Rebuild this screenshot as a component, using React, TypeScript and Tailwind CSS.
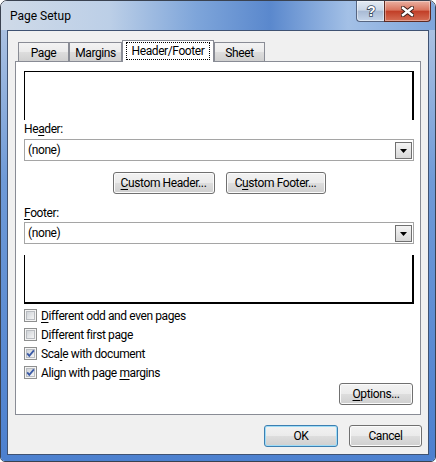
import clsx from 'clsx'
import type { ReactNode } from 'react'

const face = "font-['Roboto','Noto_Sans',sans-serif] tracking-[-0.4px]"

function Key({ children }: { children: ReactNode }) {
  return <span className="underline decoration-1 underline-offset-[2px]">{children}</span>
}

function Btn({ children, className, primary }: { children: ReactNode; className: string; primary?: boolean }) {
  return (
    <button
      type="button"
      className={clsx(
        'flex h-[22px] items-center justify-center rounded-[3px] border text-[12px] leading-4 text-black',
        'bg-[linear-gradient(#f2f2f2_0%,#ebebeb_48%,#dddddd_52%,#cfcfcf_100%)]',
        primary
          ? 'border-[#3c7fb1] shadow-[inset_0_0_0_1px_#9fdcf7]'
          : 'border-[#707070] shadow-[inset_0_0_0_1px_#fbfbfb]',
        className,
      )}
    >
      {children}
    </button>
  )
}

function Dropdown() {
  return (
    <div className="flex h-[22px] w-[390px] items-center border border-[#a5a5a5] bg-white pl-[3px] pr-[1px]">
      <span className="flex-1 text-[12px] leading-4">(none)</span>
      <div className="flex h-[17px] w-[17px] items-center justify-center border border-[#707070] bg-[linear-gradient(#f4f4f4,#d8d8d8)]">
        <svg width="7" height="4" viewBox="0 0 7 4" className="mt-[1px]">
          <path d="M0 0h7L3.5 4z" fill="#000" />
        </svg>
      </div>
    </div>
  )
}

function CheckBox({ on }: { on?: boolean }) {
  return (
    <svg width="13" height="13" viewBox="0 0 13 13" className="shrink-0">
      <defs>
        <linearGradient id="cbfill" x1="0" y1="0" x2="1" y2="1">
          <stop offset="0" stopColor="#cdd1d6" />
          <stop offset="1" stopColor="#f7f7f7" />
        </linearGradient>
      </defs>
      <rect x="0.5" y="0.5" width="12" height="12" fill="#f4f4f4" stroke="#8e8f8f" />
      <rect x="2.5" y="2.5" width="8" height="8" fill="url(#cbfill)" stroke="#b9bcc1" />
      {on && <path d="M3.2 6.3 5.3 8.8 9.9 3.3" fill="none" stroke="#3b5aa6" strokeWidth="1.8" />}
    </svg>
  )
}

const tabs = [
  { label: 'Page', width: 'w-[51px]' },
  { label: 'Margins', width: 'w-[53px]' },
  { label: 'Header/Footer', width: 'w-[92px]', active: true },
  { label: 'Sheet', width: 'w-[51px]' },
]

const options: { text: ReactNode; on?: boolean }[] = [
  { text: <><Key>D</Key>ifferent odd and even pages</> },
  { text: <>D<Key>i</Key>fferent first page</> },
  { text: <>Sca<Key>l</Key>e with document</>, on: true },
  { text: <>Align with page <Key>m</Key>argins</>, on: true },
]

export default function App() {
  return (
    <div className={clsx(face, 'flex h-[462px] w-[436px] flex-col overflow-hidden rounded-t-[7px] rounded-b-[5px] border border-[#3a4250] text-black')}>
      {/* title bar */}
      <div className="flex h-[29px] shrink-0 bg-[linear-gradient(to_right,#cfdae8_0%,#bccfe7_25%,#7ea5da_45%,#5a88cd_62%,#a3c0e6_80%,#7fa6dc_100%)]">
        <span className="mt-[7px] flex-1 pl-[9px] text-[12px] leading-4 tracking-normal">Page Setup</span>
        <div className="mr-[4px] flex h-[21px]">
          <div className="flex w-[28px] items-center justify-center rounded-bl-[4px] border border-t-0 border-r-0 border-[#566581] bg-[linear-gradient(#e4ebf4_0%,#cbd7e7_45%,#a9bbd5_52%,#c5d5ea_100%)] shadow-[inset_0_0_0_1px_rgba(255,255,255,0.45)]">
            <svg width="12" height="14" viewBox="0 0 12 14">
              <text x="6" y="12" textAnchor="middle" fontSize="14" fontWeight="bold" fontFamily="Liberation Sans, sans-serif" fill="#fff" stroke="#3b4a60" strokeWidth="1.6" paintOrder="stroke">?</text>
            </svg>
          </div>
          <div className="flex w-[47px] items-center justify-center rounded-br-[4px] border border-t-0 border-[#5e2a22] bg-[linear-gradient(#eab0a2_0%,#d9755f_45%,#c23f28_52%,#d56e55_100%)] shadow-[inset_0_0_0_1px_rgba(255,255,255,0.35)]">
            <svg width="13" height="11" viewBox="0 0 13 11">
              <path d="M2 2l9 7M11 2l-9 7" stroke="#3d1f1a" strokeWidth="4.4" strokeLinecap="square" />
              <path d="M2 2l9 7M11 2l-9 7" stroke="#fff" strokeWidth="2.4" strokeLinecap="square" />
            </svg>
          </div>
        </div>
      </div>

      {/* frame body */}
      <div className="flex flex-1 flex-col bg-[linear-gradient(#aac1e2,#6f9ad7_35%,#4c80cf)] px-[6px] pb-[6px]">
        <div className="flex flex-1 flex-col border border-[#3f5272] bg-[#f0f0f0] pt-[9px]">
          {/* tabs */}
          <div className="relative z-10 -mb-px ml-[10px] flex h-[22px] items-end text-[12px] leading-4">
            {tabs.map((t) =>
              t.active ? (
                <div key={t.label} className={clsx(t.width, 'flex h-[22px] items-start justify-center border border-b-0 border-[#898c95] bg-white pt-[1px]')}>
                  <span className="flex h-[18px] items-center border border-dotted border-black px-[5px]">{t.label}</span>
                </div>
              ) : (
                <div key={t.label} className={clsx(t.width, 'mb-[1px] flex h-[19px] items-center justify-center border border-b-0 border-[#898c95] bg-[linear-gradient(#f3f3f3_0%,#ebebeb_48%,#dddddd_52%,#d0d0d0_100%)] pt-[1px]')}>
                  {t.label}
                </div>
              ),
            )}
          </div>

          {/* panel */}
          <div className="mx-[7px] flex h-[354px] flex-col border border-[#898c95] bg-white pb-[9px] pl-[8px] text-[12px] leading-4">
            <div className="mt-[9px] h-[49px] w-[390px] border-t border-l border-r-2 border-black" />
            <span className="mt-[1px] h-4">
              He<Key>a</Key>der:
            </span>
            <div className="mt-[2px]">
              <Dropdown />
            </div>
            <div className="mt-[11px] flex w-[390px] justify-center gap-[11px]">
              <Btn className="w-[102px]">
                <Key>C</Key>ustom Header...
              </Btn>
              <Btn className="w-[100px]">
                C<Key>u</Key>stom Footer...
              </Btn>
            </div>
            <span className="mt-[11px] h-4">
              <Key>F</Key>ooter:
            </span>
            <div className="mt-[1px]">
              <Dropdown />
            </div>
            <div className="mt-[11px] h-[49px] w-[390px] border-l border-r-2 border-b-2 border-black" />
            <div className="mt-[2px] flex flex-col">
              {options.map((o, i) => (
                <label key={i} className="flex h-[19px] items-center gap-[4px]">
                  <CheckBox on={o.on} />
                  <span>{o.text}</span>
                </label>
              ))}
            </div>
            <div className="mt-auto flex justify-end pr-[7px]">
              <Btn className="w-[74px]">
                <Key>O</Key>ptions...
              </Btn>
            </div>
          </div>

          {/* dialog buttons */}
          <div className="mt-[10px] flex justify-end gap-[11px] pr-[6px]">
            <Btn primary className="w-[74px]">
              OK
            </Btn>
            <Btn className="w-[73px]">Cancel</Btn>
          </div>
        </div>
      </div>
    </div>
  )
}
